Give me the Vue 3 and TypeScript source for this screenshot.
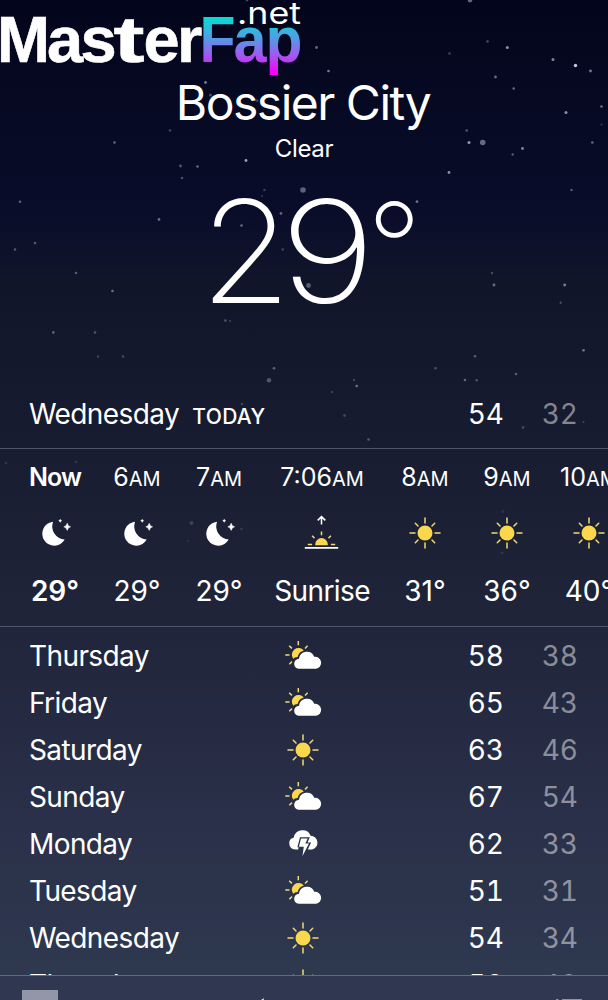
<script setup lang="ts">
type IconName = 'moon' | 'sun' | 'sunrise' | 'partly' | 'storm'

interface Hour {
  time: string
  suffix: string
  icon: IconName
  value: string
  now?: boolean
  wide?: boolean
}

interface Day {
  name: string
  icon: IconName
  high: number
  low: number
}

const hours: Hour[] = [
  { time: 'Now', suffix: '', icon: 'moon', value: '29°', now: true },
  { time: '6', suffix: 'AM', icon: 'moon', value: '29°' },
  { time: '7', suffix: 'AM', icon: 'moon', value: '29°' },
  { time: '7:06', suffix: 'AM', icon: 'sunrise', value: 'Sunrise', wide: true },
  { time: '8', suffix: 'AM', icon: 'sun', value: '31°' },
  { time: '9', suffix: 'AM', icon: 'sun', value: '36°' },
  { time: '10', suffix: 'AM', icon: 'sun', value: '40°' },
]

const days: Day[] = [
  { name: 'Thursday', icon: 'partly', high: 58, low: 38 },
  { name: 'Friday', icon: 'partly', high: 65, low: 43 },
  { name: 'Saturday', icon: 'sun', high: 63, low: 46 },
  { name: 'Sunday', icon: 'partly', high: 67, low: 54 },
  { name: 'Monday', icon: 'storm', high: 62, low: 33 },
  { name: 'Tuesday', icon: 'partly', high: 51, low: 31 },
  { name: 'Wednesday', icon: 'sun', high: 54, low: 34 },
  { name: 'Thursday', icon: 'sun', high: 58, low: 40 },
]

// x, y, radius, opacity
const stars: [number, number, number, number][] = [
  [470, 0, 2.4, 0.5], [247, 0, 1.4, 0.35], [316.5, 47.5, 1.4, 0.5], [328.5, 71, 1.3, 0.6],
  [449.5, 53.5, 1.4, 0.25], [487.5, 41.5, 1.4, 0.3], [507.3, 47.5, 1.5, 0.7], [553, 59.5, 1.5, 0.65],
  [575.5, 65.5, 1.7, 1], [590.5, 71, 1.4, 0.6], [495.5, 77, 1.4, 0.5], [513.7, 88.5, 1.3, 0.5],
  [601.5, 106.5, 1.3, 0.55], [566, 112.5, 1.5, 0.7], [601.5, 124.5, 1.1, 0.25], [466.7, 130.5, 1.3, 0.4],
  [469, 142.5, 1.5, 0.75], [482.7, 142.5, 2.8, 0.5], [592.3, 142.5, 1.3, 0.5], [522.5, 148.5, 1.4, 0.65],
  [512.7, 154.5, 1.3, 0.4], [449, 172.5, 1.4, 0.7], [571.5, 190, 1.3, 0.4], [303, 190, 2.8, 0.45],
  [205.5, 82.5, 1.4, 0.6], [210.5, 95, 1.6, 0.35], [257, 100.5, 1.5, 0.25], [170, 130.5, 1.4, 0.25],
  [114.5, 142.5, 1.4, 0.4], [246, 160.5, 1.4, 0.8], [180.5, 166, 1.4, 0.4], [197.5, 166.5, 1.3, 0.5],
  [182, 178, 1.3, 0.35], [20, 201.7, 1.3, 0.45], [159, 219.5, 1.4, 0.5], [35, 243, 1.3, 0.4],
  [15, 249.5, 1.3, 0.4], [76, 273, 1.3, 0.4], [112.5, 291, 1.3, 0.5], [53.3, 332.5, 1.4, 0.4],
  [95, 332.5, 1.3, 0.35], [98, 356.5, 1.2, 0.25], [123, 356.5, 1.2, 0.3], [264.5, 190, 1.3, 0.25],
  [262, 196, 1.2, 0.18], [241.5, 225.5, 1.3, 0.5], [281, 213.5, 1.4, 0.45], [282.7, 249.5, 1.2, 0.3],
  [322, 261, 1.5, 0.35], [308.5, 285.5, 2.4, 0.4], [225.3, 320.5, 1.3, 0.35], [230, 321, 1.1, 0.25],
  [417, 201.7, 1.4, 0.5], [492, 273, 1.2, 0.3], [494, 285, 1.4, 0.5], [564.7, 285, 1.4, 0.6],
  [560.7, 302.7, 1.2, 0.3], [583.5, 350.3, 1.4, 0.5], [475, 356.3, 1.3, 0.4], [435.5, 368.3, 1.3, 0.3],
  [516, 374, 1.3, 0.4], [465, 380, 1.3, 0.45], [476.7, 380.3, 1.2, 0.35], [274, 368.3, 1.4, 0.4],
  [269, 380.3, 2.3, 0.35], [354, 380, 1.2, 0.25], [356.7, 386, 1.3, 0.5], [332, 392, 1.3, 0.2],
  [344.5, 415.5, 1.4, 0.25], [368.5, 439.5, 1.3, 0.35], [523, 427.5, 1.3, 0.3], [583.5, 422, 1, 0.25],
  [242, 404, 1.3, 0.25], [6, 463, 1.3, 0.15], [76, 462, 1.3, 0.15], [191.5, 523, 2, 0.2],
  [241.5, 529, 1.2, 0.18], [188, 541, 1.2, 0.1], [503, 511.5, 1.4, 0.12], [502, 553, 1.4, 0.12],
]
</script>

<template>
  <main class="weather">
    <svg class="sky" viewBox="0 0 608 1000" aria-hidden="true">
      <circle v-for="(s, i) in stars" :key="i" :cx="s[0]" :cy="s[1]" :r="s[2]" :opacity="s[3]" />
    </svg>

    <svg class="symbols" aria-hidden="true">
      <symbol id="moon" viewBox="0 0 40 40">
        <path d="M18.1 8.7A12 12 0 1 0 29.7 26.6A13.2 13.2 0 0 1 18.1 8.7Z" fill="#fff" />
        <path d="M32.2 10.2Q32.8 13.2 35.6 13.8Q32.8 14.4 32.2 17.4Q31.6 14.4 28.8 13.8Q31.6 13.2 32.2 10.2Z" fill="#fff" stroke="#fff" stroke-width=".5" />
        <path d="M25.2 5.8Q25.6 7.5 27.1 7.8Q25.6 8.1 25.2 9.8Q24.8 8.1 23.3 7.8Q24.8 7.5 25.2 5.8Z" fill="#fff" />
      </symbol>
      <symbol id="sun" viewBox="0 0 40 40">
        <circle cx="20" cy="20" r="7.5" fill="#fad74d" />
        <path d="M20 5V10M20 30V35M5 20H10M30 20H35M10.3 10.3L13 13M27 27L29.7 29.7M29.7 10.3L27 13M13 27L10.3 29.7" stroke="#f0d974" stroke-width="1.5" stroke-linecap="round" />
      </symbol>
      <symbol id="sunrise" viewBox="0 0 40 40">
        <path d="M19.5 11.5V3.8M15.7 7.4L19.5 3.6L23.3 7.4" fill="none" stroke="#fff" stroke-width="1.5" />
        <path d="M13.2 32.2V31.4A6.3 6.3 0 0 1 25.8 31.4V32.2Z" fill="#fad74d" />
        <path d="M19.5 18.5V22.2M10.1 22.8L12.5 25.1M28.9 22.8L26.5 25.1M5.8 31.5H10.1M28.9 31.5H33.2" stroke="#f0d974" stroke-width="1.5" />
        <path d="M2.8 34.8H36.2" stroke="#fff" stroke-width="1.7" />
      </symbol>
      <symbol id="partly" viewBox="0 0 40 40">
        <path d="M10.2 22.8A6.6 6.6 0 1 1 20.8 14.6Q15.8 16 14.6 21Q11.5 21.2 10.2 22.8Z" fill="#fad74d" />
        <path d="M15.3 5V9.2M2.3 19H6.5M6.2 9.7L8.9 12.4M24.6 9.7L22 12.4M9 25.6L6.3 28.2" stroke="#f0d974" stroke-width="1.5" />
        <path d="M16.3 32.8A5 5 0 0 1 16 22.8A7.9 7.9 0 0 1 31.2 20.8A6 6 0 0 1 33 32.8Z" fill="#fff" />
      </symbol>
      <symbol id="storm" viewBox="0 0 40 40">
        <path d="M15.2 25.5H12.2A6.1 6.1 0 0 1 10.8 13.5A8.8 8.8 0 0 1 27.6 11.7A7 7 0 0 1 29.1 25.5H24.8L28.1 18.4H24.5L26.8 13.2H17L14.4 23.2H15.6Z" fill="#fff" />
        <path d="M18 14.6H24.7L22.3 19.6H26L19.5 32L20.8 22.7H15.9Z" fill="#fff" />
      </symbol>
    </svg>

    <svg class="brand" width="310" height="82" viewBox="0 0 310 82" role="img" aria-label="MasterFap.net">
      <defs>
        <linearGradient id="brand-fill" gradientUnits="userSpaceOnUse" x1="0" y1="17" x2="0" y2="73">
          <stop offset="0" stop-color="#04dfd4" />
          <stop offset=".35" stop-color="#4aa2e4" />
          <stop offset=".65" stop-color="#9a60f2" />
          <stop offset="1" stop-color="#fb00fb" />
        </linearGradient>
      </defs>
      <text class="brand-main" y="62"><tspan x="-3" textLength="53" lengthAdjust="spacingAndGlyphs">M</tspan><tspan x="47">a</tspan><tspan x="80.5">s</tspan><tspan x="113.5" textLength="31" lengthAdjust="spacingAndGlyphs">t</tspan><tspan x="143.5">e</tspan><tspan x="177">r</tspan></text>
      <text class="brand-accent" y="62" fill="url(#brand-fill)"><tspan x="199.5" textLength="36" lengthAdjust="spacingAndGlyphs">F</tspan><tspan x="233.5" textLength="33" lengthAdjust="spacingAndGlyphs">a</tspan><tspan x="265.5" textLength="37" lengthAdjust="spacingAndGlyphs">p</tspan></text>
      <text class="brand-net" x="237" y="24" textLength="64" lengthAdjust="spacingAndGlyphs">.net</text>
    </svg>

    <header class="current">
      <h1>Bossier City</h1>
      <p class="condition">Clear</p>
      <svg class="temperature" width="608" height="176" viewBox="0 164 608 176" role="img" aria-label="29°">
        <text transform="translate(200 303.3) scale(1.05 1.012)">2</text>
        <text transform="translate(280 303.3) scale(1.16 1.012)">9</text>
        <text transform="translate(367 289) scale(.85)">°</text>
      </svg>
    </header>

    <section class="row today">
      <span class="name">Wednesday <b>TODAY</b></span>
      <span class="high">54</span>
      <span class="low">32</span>
    </section>

    <section class="hourly">
      <div v-for="(h, i) in hours" :key="i" class="hour" :class="{ now: h.now, wide: h.wide }">
        <span class="time">{{ h.time }}<small v-if="h.suffix">{{ h.suffix }}</small></span>
        <svg class="icon"><use :href="'#' + h.icon" /></svg>
        <span class="value">{{ h.value }}</span>
      </div>
    </section>

    <section class="daily">
      <div v-for="(d, i) in days" :key="i" class="row">
        <span class="name">{{ d.name }}</span>
        <svg class="icon"><use :href="'#' + d.icon" /></svg>
        <span class="high">{{ d.high }}</span>
        <span class="low">{{ d.low }}</span>
      </div>
    </section>

    <footer class="toolbar">
      <span class="tile"></span>
      <svg class="location" width="24" height="24" viewBox="0 0 24 24"><path d="M20 .3L3 10L12 12L14 22Z" fill="#fff" /></svg>
      <svg class="menu" width="30" height="24" viewBox="0 0 30 24"><path d="M8 2H28M8 10H28M8 18H28M2 2H4.5M2 10H4.5M2 18H4.5" stroke="#8d93a8" stroke-width="2" /></svg>
    </footer>
  </main>
</template>

<style>
body {
  margin: 0;
  overflow: hidden;
}
</style>

<style scoped>
.weather {
  position: relative;
  display: flex;
  flex-direction: column;
  width: 608px;
  height: 1000px;
  overflow: hidden;
  color: #fff;
  font-family: Inter, "Liberation Sans", sans-serif;
  background: linear-gradient(180deg, #02051b 0, #060922 100px, #0a0d2a 215px, #10152a 280px, #161a2f 400px, #1b2034 520px, #20253b 630px, #2a3049 820px, #2e384f 970px, #303a54 1000px);
}
.weather > * {
  flex: none;
  box-sizing: border-box;
}
h1, p {
  margin: 0;
}
.sky, .brand {
  position: absolute;
  left: 0;
  top: 0;
}
.sky {
  width: 608px;
  height: 1000px;
  fill: #c3c7e4;
  filter: blur(.5px);
}
.symbols {
  position: absolute;
  width: 0;
  height: 0;
}
.brand text {
  font-family: "Liberation Sans", sans-serif;
  font-size: 65px;
  font-weight: 700;
}
.brand .brand-main {
  fill: #fff;
  stroke: #fff;
  stroke-width: .6px;
}
.brand .brand-net {
  fill: #fff;
  font-family: Inter, sans-serif;
  font-size: 30px;
  font-weight: 400;
}
.current {
  position: relative;
  height: 390px;
  padding-top: 73px;
  text-align: center;
}
h1 {
  padding-right: 2px;
  font-size: 48px;
  line-height: 60px;
  font-weight: 400;
  letter-spacing: -1.5px;
}
.condition {
  font-size: 24px;
  line-height: 31px;
  letter-spacing: -.3px;
}
.temperature {
  display: block;
  fill: #fff;
  font-size: 141px;
  font-weight: 200;
}
.row {
  position: relative;
  display: grid;
  grid-template-columns: 254px 40px 1fr 74px;
  align-items: center;
  box-sizing: border-box;
  height: 47px;
  padding: 0 30px 0 29px;
  font-size: 28px;
  font-weight: 400;
}
.name {
  grid-column: 1;
  white-space: nowrap;
  letter-spacing: -.6px;
}
.high, .low {
  text-align: right;
  font-variant-numeric: tabular-nums;
}
.high {
  grid-column: 3;
}
.low {
  grid-column: 4;
  color: rgba(255, 255, 255, .48);
}
.today {
  height: 58px;
  padding-bottom: 10px;
}
.today b {
  margin-left: 6px;
  font-size: 21px;
  font-weight: 500;
  letter-spacing: .3px;
}
.icon {
  width: 40px;
  height: 40px;
}
.hourly {
  position: relative;
  display: flex;
  height: 179px;
  padding-left: 14px;
  border-top: 1px solid #50556a;
  border-bottom: 1px solid #50556a;
}
.hour {
  display: flex;
  flex: 0 0 82px;
  flex-direction: column;
  align-items: center;
}
.hour.wide {
  flex-basis: 124px;
}
.wide .value {
  letter-spacing: -.6px;
}
.time {
  height: 64px;
  font-size: 25px;
  line-height: 57px;
  white-space: nowrap;
}
.time small {
  font-size: 20px;
}
.value {
  margin-top: 19px;
  font-size: 28px;
  line-height: 38px;
}
.now .time, .now .value {
  font-weight: 600;
}
.now .time {
  letter-spacing: -1px;
}
.daily {
  height: 348px;
  padding-top: 5px;
  overflow: hidden;
}
.toolbar {
  position: relative;
  display: flex;
  height: 25px;
  padding: 14px 24px 0 22px;
  border-top: 1px solid #626a83;
  background: #303751;
}
.tile {
  flex: none;
  width: 36px;
  height: 36px;
  background: #9296a8;
}
.toolbar svg {
  flex: none;
  margin-top: 8px;
}
.location {
  margin-left: 186px;
}
.menu {
  margin-left: auto;
}
</style>
